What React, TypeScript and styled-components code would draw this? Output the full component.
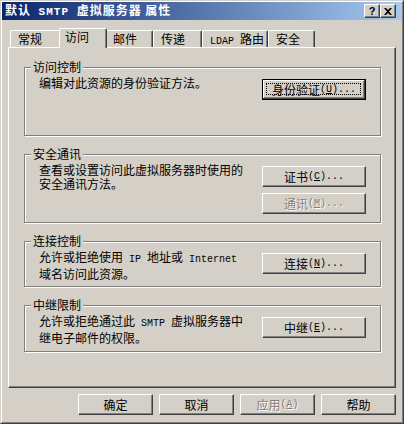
import styled, { createGlobalStyle } from "styled-components";

const face = "#d4d0c8";

const GlobalStyle = createGlobalStyle`
  html, body {
    margin: 0;
    padding: 0;
    background: ${face};
  }
  body {
    font-family: "Noto Sans CJK SC", "Liberation Sans", sans-serif;
    font-size: 12px;
    color: #000;
  }
`;

const Window = styled.div`
  box-sizing: border-box;
  width: 404px;
  height: 424px;
  background: ${face};
  border: 1px solid;
  border-color: ${face} #404040 #404040 ${face};
  display: flex;
  flex-direction: column;
`;

const Frame = styled.div`
  flex: 1;
  border: 1px solid;
  border-color: #fff #808080 #808080 #fff;
  display: flex;
  flex-direction: column;
`;

const TitleBar = styled.div`
  height: 18px;
  display: flex;
  align-items: center;
  padding: 0 6px 0 3px;
  background: linear-gradient(to right, #0a246a, #a6caf0);
`;

const Title = styled.span`
  color: #fff;
  font-weight: bold;
  font-size: 12px;
  line-height: 13px;
  letter-spacing: 1px;
`;

const CaptionButtons = styled.div`
  margin-left: auto;
  display: flex;
`;

const CaptionButton = styled.div`
  box-sizing: border-box;
  width: 16px;
  height: 14px;
  background: ${face};
  border: 1px solid;
  border-color: #fff #404040 #404040 #fff;
  box-shadow: inset -1px -1px 0 #808080;
  display: flex;
  align-items: center;
  justify-content: center;
  font-family: "Liberation Sans", sans-serif;
  font-weight: bold;
  font-size: 11px;
  line-height: 11px;
`;

const Body = styled.div`
  flex: 1;
  display: flex;
  flex-direction: column;
  padding: 8px 6px 0 6px;
`;

const TabStrip = styled.div`
  height: 20px;
  display: flex;
  align-items: flex-end;
  padding-left: 2px;
  margin-bottom: -1px;
  position: relative;
  z-index: 1;
`;

const Tab = styled.div<{ $w: number; $active?: boolean }>`
  box-sizing: border-box;
  width: ${(p) => p.$w}px;
  height: ${(p) => (p.$active ? 20 : 17)}px;
  margin: ${(p) => (p.$active ? "0 -2px" : "0 0 1px 0")};
  padding: 2px 0 0 ${(p) => (p.$active ? 5 : 7)}px;
  background: ${face};
  border-top: 1px solid #fff;
  border-left: 1px solid #fff;
  border-right: 1px solid #404040;
  border-top-left-radius: 2px;
  border-top-right-radius: 2px;
  box-shadow: inset -1px 0 0 #808080;
  line-height: 12px;
  white-space: nowrap;
  position: relative;
  z-index: ${(p) => (p.$active ? 2 : 1)};
`;

const Panel = styled.div`
  box-sizing: border-box;
  height: 341px;
  border: 1px solid;
  border-color: #fff #404040 #404040 #fff;
  box-shadow: inset -1px -1px 0 #808080;
  padding: 19px 14px 0 15px;
  display: flex;
  flex-direction: column;
  gap: 18px;
`;

const Group = styled.div<{ $h: number }>`
  position: relative;
  box-sizing: border-box;
  height: ${(p) => p.$h}px;
  border: 1px solid #808080;
  box-shadow: inset 1px 1px 0 #fff, 1px 1px 0 #fff;
  padding: 9px 14px 0 14px;
  display: flex;
  justify-content: space-between;
  align-items: flex-start;
`;

const Legend = styled.span`
  position: absolute;
  left: 6px;
  top: -8px;
  padding: 0 2px;
  background: ${face};
  line-height: 13px;
`;

const Text = styled.div`
  line-height: 14px;
  white-space: nowrap;
  margin-top: -1px;
`;

const ButtonColumn = styled.div`
  display: flex;
  flex-direction: column;
  gap: 6px;
  margin-top: 2px;
`;

const Btn = styled.div<{ $w: number; $default?: boolean; $disabled?: boolean }>`
  position: relative;
  box-sizing: border-box;
  width: ${(p) => p.$w}px;
  height: 21px;
  background: ${face};
  border: 1px solid;
  border-color: ${(p) => (p.$default ? "#000" : "#fff #404040 #404040 #fff")};
  box-shadow: ${(p) =>
    p.$default
      ? "inset -1px -1px 0 #404040, inset 1px 1px 0 #fff, inset -2px -2px 0 #808080"
      : "inset -1px -1px 0 #808080"};
  display: flex;
  align-items: center;
  justify-content: center;
  line-height: 13px;
  white-space: nowrap;
  color: ${(p) => (p.$disabled ? "#808080" : "#000")};
  text-shadow: ${(p) => (p.$disabled ? "1px 1px 0 #fff" : "none")};

  ${(p) =>
    p.$default &&
    `
    &::after {
      content: "";
      position: absolute;
      left: 3px;
      top: 3px;
      right: 4px;
      bottom: 4px;
      border: 1px dotted #000;
    }
  `}
`;

const Footer = styled.div`
  display: flex;
  justify-content: flex-end;
  gap: 6px;
  margin-top: 6px;
`;

const M = styled.span`
  font-family: "Liberation Mono", monospace;
  font-size: 10px;
  white-space: pre;
`;

const CloseGlyph = () => (
  <svg width="8" height="7" viewBox="0 0 8 7">
    <path d="M0 0h2l2 2 2-2h2L5 3.5 8 7H6L4 5 2 7H0l3-3.5z" fill="#000" />
  </svg>
);

const tabs = [
  { label: <>常规</>, w: 51 },
  { label: <>访问</>, w: 48, active: true },
  { label: <>邮件</>, w: 48 },
  { label: <>传递</>, w: 49 },
  { label: <><M>LDAP </M>路由</>, w: 66 },
  { label: <>安全</>, w: 47 },
];

export default function App() {
  return (
    <>
      <GlobalStyle />
      <Window>
        <Frame>
          <TitleBar>
            <Title>
              默认<M style={{ fontWeight: "bold", fontSize: 11 }}> SMTP </M>虚拟服务器 属性
            </Title>
            <CaptionButtons>
              <CaptionButton>?</CaptionButton>
              <CaptionButton>
                <CloseGlyph />
              </CaptionButton>
            </CaptionButtons>
          </TitleBar>
          <Body>
            <TabStrip>
              {tabs.map((t, i) => (
                <Tab key={i} $w={t.w} $active={t.active}>
                  {t.label}
                </Tab>
              ))}
            </TabStrip>
            <Panel>
              <Group $h={69}>
                <Legend>访问控制</Legend>
                <Text>编辑对此资源的身份验证方法。</Text>
                <ButtonColumn>
                  <Btn $w={104} $default>
                    身份验证<M>(<u>U</u>)...</M>
                  </Btn>
                </ButtonColumn>
              </Group>
              <Group $h={69}>
                <Legend>安全通讯</Legend>
                <Text>
                  查看或设置访问此虚拟服务器时使用的
                  <br />
                  安全通讯方法。
                </Text>
                <ButtonColumn>
                  <Btn $w={104}>
                    证书<M>(<u>C</u>)...</M>
                  </Btn>
                  <Btn $w={104} $disabled>
                    通讯<M>(<u>M</u>)...</M>
                  </Btn>
                </ButtonColumn>
              </Group>
              <Group $h={46}>
                <Legend>连接控制</Legend>
                <Text>
                  允许或拒绝使用<M> IP </M>地址或<M> Internet</M>
                  <br />
                  域名访问此资源。
                </Text>
                <ButtonColumn>
                  <Btn $w={104}>
                    连接<M>(<u>N</u>)...</M>
                  </Btn>
                </ButtonColumn>
              </Group>
              <Group $h={47}>
                <Legend>中继限制</Legend>
                <Text>
                  允许或拒绝通过此<M> SMTP </M>虚拟服务器中
                  <br />
                  继电子邮件的权限。
                </Text>
                <ButtonColumn>
                  <Btn $w={104}>
                    中继<M>(<u>E</u>)...</M>
                  </Btn>
                </ButtonColumn>
              </Group>
            </Panel>
            <Footer>
              <Btn $w={75}>确定</Btn>
              <Btn $w={75}>取消</Btn>
              <Btn $w={75} $disabled>
                应用<M>(<u>A</u>)</M>
              </Btn>
              <Btn $w={75}>帮助</Btn>
            </Footer>
          </Body>
        </Frame>
      </Window>
    </>
  );
}
